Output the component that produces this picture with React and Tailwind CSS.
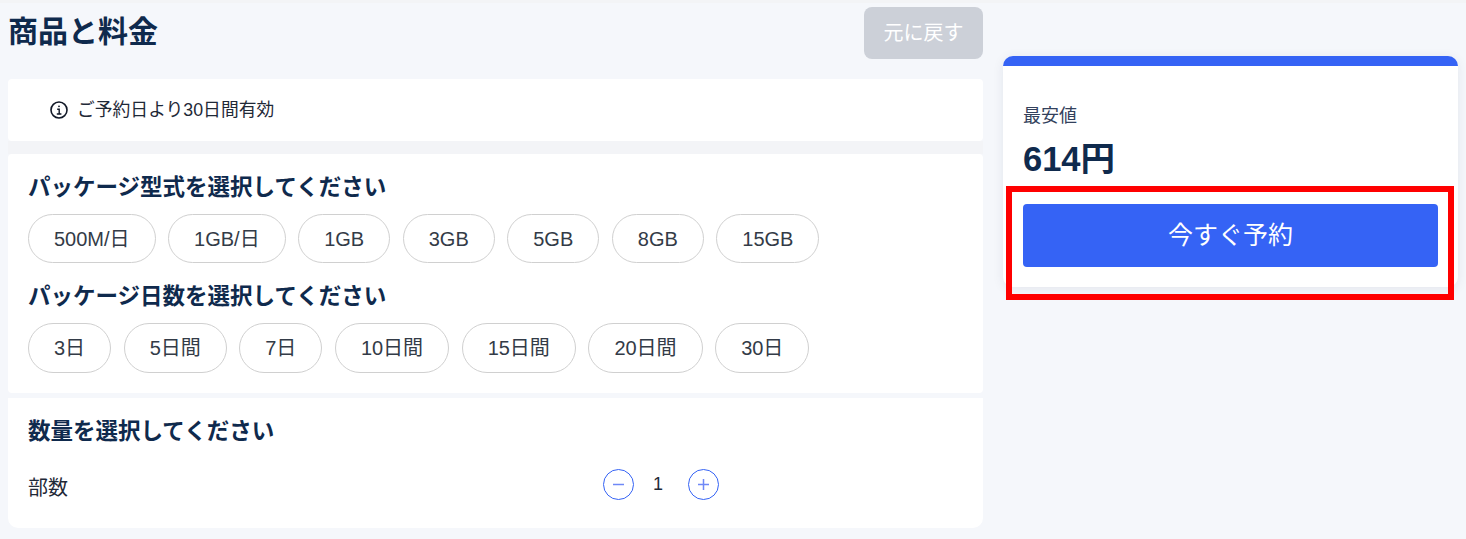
import React from "react";

const types = ["500M/日", "1GB/日", "1GB", "3GB", "5GB", "8GB", "15GB"];
const days = ["3日", "5日間", "7日", "10日間", "15日間", "20日間", "30日"];

function Chip({ label, tall }) {
  return (
    <div className={`${tall ? "h-[50px]" : "h-[49px]"} px-[25px] flex items-center justify-center rounded-[25px] border border-[#d0d0d0] bg-white text-[20px] text-[#333b47]`}>
      {label}
    </div>
  );
}

function Round({ children }) {
  return (
    <div className="w-[31px] h-[31px] rounded-full border border-[#3563f5] flex items-center justify-center">
      <svg width="15" height="15" viewBox="0 0 15 15" fill="none" stroke="#6f88f7" strokeWidth="1.5">
        {children}
      </svg>
    </div>
  );
}

export default function App() {
  return (
    <div className="relative w-[1466px] h-[539px] overflow-hidden bg-[#f5f7fb] font-['Liberation_Sans','Noto_Sans_CJK_JP',sans-serif] text-[#0f2a4d]">
      <div className="h-[3px] bg-[#f3f4f6]" />
      <div className="flex gap-[20px] pl-[8px] pt-[4px]">
        <div className="w-[975px] flex flex-col">
          <div className="flex justify-between h-[52px] mb-[20px]">
            <h1 className="text-[30px] leading-[50px] font-bold">商品と料金</h1>
            <div className="w-[119px] h-[52px] rounded-[8px] bg-[#ccd0d8] text-white text-[20px] flex items-center justify-center">
              元に戻す
            </div>
          </div>

          <div className="h-[62px] bg-white rounded-[4px] flex items-center pl-[42px] gap-[9px] text-[17.8px] text-[#1f2937]">
            <svg width="18" height="18" viewBox="0 0 18 18" fill="none" stroke="#111827" strokeWidth="1.6">
              <circle cx="9" cy="9" r="8" />
              <path d="M7.2 8.2h2v4.6M6.8 13h4.6" strokeWidth="1.4" />
              <circle cx="9" cy="5.3" r="0.9" fill="#111827" stroke="none" />
            </svg>
            <span>ご予約日より30日間有効</span>
          </div>

          <div className="h-[13px] bg-[#f3f4f7]" />

          <div className="h-[239px] bg-white rounded-[4px] px-[20px] pt-[18px] mb-[5px]">
            <h2 className="text-[22.5px] leading-[32px] font-bold">パッケージ型式を選択してください</h2>
            <div className="flex gap-[12.5px] mt-[10px]">
              {types.map((t) => (
                <Chip key={t} label={t} />
              ))}
            </div>
            <h2 className="text-[22.5px] leading-[32px] font-bold mt-[18px]">パッケージ日数を選択してください</h2>
            <div className="flex gap-[12.5px] mt-[10px]">
              {days.map((t) => (
                <Chip key={t} label={t} tall />
              ))}
            </div>
          </div>

          <div className="h-[130px] bg-white rounded-b-[10px] px-[20px] pt-[18px]">
            <h2 className="text-[22.5px] leading-[32px] font-bold">数量を選択してください</h2>
            <div className="flex items-center mt-[20px] h-[32px]">
              <span className="w-[575px] text-[20px] text-[#1f2937] pt-[8px]">部数</span>
              <Round>
                <path d="M2 7.5h11" />
              </Round>
              <span className="w-[54px] pr-[6px] text-center text-[18px] text-[#1f2937]">1</span>
              <Round>
                <path d="M2 7.5h11M7.5 2v11" />
              </Round>
            </div>
          </div>
        </div>

        <div className="w-[455px] mt-[49px] h-[231px] bg-white rounded-[10px] border-t-[10px] border-[#3563f5] shadow-[0_2px_12px_rgba(30,40,80,0.08)] px-[20px] pt-[39px]">
          <div className="text-[18px] leading-[22px] text-[#33415c]">最安値</div>
          <div className="text-[34.5px] leading-[44px] font-bold mt-[10px]">614円</div>
          <div className="h-[63px] mt-[23px] rounded-[4px] bg-[#3563f5] text-white text-[25px] flex items-center justify-center">
            今すぐ予約
          </div>
        </div>
      </div>

      <div className="absolute left-[1006px] top-[186px] w-[448px] h-[114px] border-[6px] border-[#ff0000]" />
    </div>
  );
}
